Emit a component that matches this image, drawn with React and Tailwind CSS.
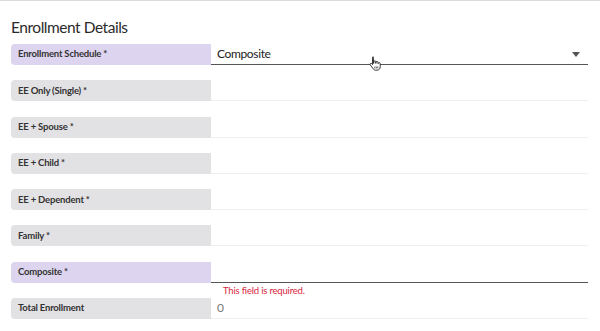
const rows = [
  { label: 'Enrollment Schedule *', value: 'Composite', active: true, select: true },
  { label: 'EE Only (Single) *' },
  { label: 'EE + Spouse *' },
  { label: 'EE + Child *' },
  { label: 'EE + Dependent *' },
  { label: 'Family *' },
  { label: 'Composite *', active: true, error: 'This field is required.' },
  { label: 'Total Enrollment', value: '0', muted: true },
];

function HandCursor() {
  return (
    <svg width="13" height="15" viewBox="0 0 13 15" className="ml-[98px] -mb-[7px] self-end">
      <path
        d="M3.5 1.2c.6 0 1 .4 1 1v5.2h.3V5.8c0-.6.4-1 1-1s1 .4 1 1v1.6h.2V6.4c0-.6.4-1 1-1s1 .4 1 1v1.2h.2c0-.6.4-1 1-1s1 .4 1 1v3.2c0 1.9-1.2 3.4-3.2 3.4H6.6c-1 0-1.8-.5-2.4-1.3L1.3 8.9c-.4-.5-.3-1.1.2-1.4.5-.3 1-.2 1.4.3l.6.8V2.2c0-.6.4-1 1-1z"
        fill="#fff"
        stroke="#222"
        strokeWidth="0.9"
        strokeLinejoin="round"
      />
      <path d="M5.8 10.5v2M7.3 10.5v2M8.8 10.5v2" stroke="#222" strokeWidth="0.7" />
    </svg>
  );
}

export default function App() {
  return (
    <div className="w-[600px] h-[331px] bg-white border-t border-[#dcdce0] overflow-hidden font-['Lato','Open_Sans',sans-serif]">
      <div className="pl-[11px] pr-[12px] pt-[16px]">
        <h2 className="text-[15.5px] leading-[20px] tracking-[-0.03em] text-[#2b2b2b] mb-[7px]">Enrollment Details</h2>
        <div className="flex flex-col">
          {rows.map((r) => (
            <div key={r.label} className="h-[36.3px] flex flex-col">
              <div className="flex h-[21px]">
                <div
                  className={`w-[200px] shrink-0 rounded-l-[4px] flex items-center pl-[7px] text-[9.5px] tracking-[-0.02em] font-bold text-[#333] ${
                    r.active ? 'bg-[#ddd4ef]' : 'bg-[#e2e1e4]'
                  }`}
                >
                  {r.label}
                </div>
                <div
                  className={`flex-1 flex items-center pl-[6px] pr-[8px] border-b ${
                    r.active ? 'border-[#555]' : 'border-[#efeff2]'
                  }`}
                >
                  {r.value && (
                    <span
                      className={`text-[12px] tracking-[-0.03em] ${r.muted ? 'text-[#777]' : 'text-[#222]'}`}
                    >
                      {r.value}
                    </span>
                  )}
                  {r.select && (
                    <>
                      <HandCursor />
                      <span className="ml-auto w-0 h-0 border-l-[4px] border-r-[4px] border-t-[5px] border-l-transparent border-r-transparent border-t-[#555]" />
                    </>
                  )}
                </div>
              </div>
              {r.error && (
                <div className="pl-[212px] pt-[2px] text-[9.5px] tracking-[-0.02em] leading-[12px] text-[#d6243c]">
                  {r.error}
                </div>
              )}
            </div>
          ))}
        </div>
      </div>
    </div>
  );
}
